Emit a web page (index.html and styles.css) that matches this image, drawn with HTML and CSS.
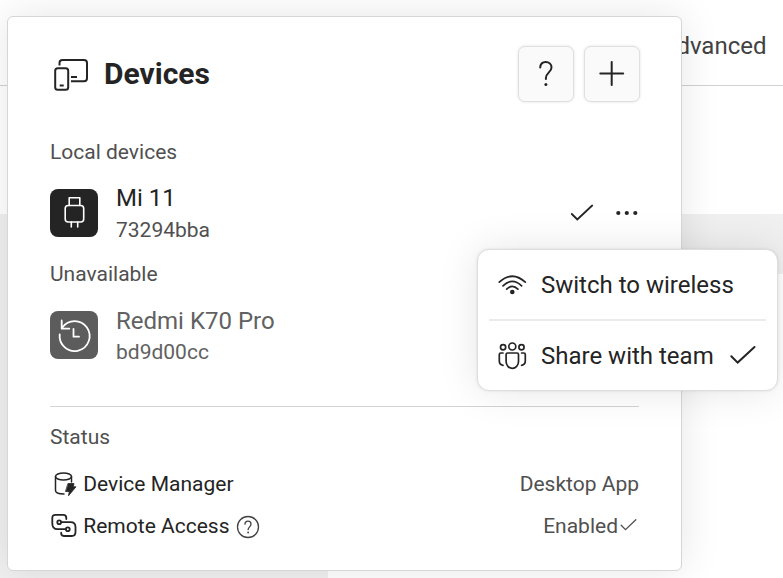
FILE: index.html
```html
<!DOCTYPE html>
<html lang="en">
<head>
<meta charset="utf-8">
<title>Devices</title>
<link rel="stylesheet" href="styles.css">
</head>
<body>
<div class="page">
  <header class="topbar"><span class="tab">Advanced</span></header>
  <main class="workspace">
    <aside class="sidebar"></aside>
    <div class="toolbar"></div>
  </main>
</div>

<section class="card">
  <header class="card-header">
    <svg class="devices-icon" width="36" height="34" viewBox="0 0 36 34" fill="none" stroke="currentColor" stroke-width="2" stroke-linecap="butt">
      <path d="M5.500 7.500V5Q5.500 2 8.500 2H30Q33 2 33 5V20.300Q33 23.300 30 23.300H17M17 19H23"/>
      <rect x="1.200" y="10.300" width="13" height="21.400" rx="2.500"/>
      <path d="M5.700 27.500H9.700"/>
    </svg>
    <h1>Devices</h1>
    <div class="actions">
      <button aria-label="Help"><svg width="30" height="30" viewBox="0 0 30 30" fill="none" stroke="currentColor" stroke-width="2" stroke-linecap="round"><path d="M9.200 8.500C9.500 4.800 11.700 3 14.700 3C17.900 3 20.500 5.200 20.500 8.500C20.500 13 14.900 13.800 14.900 19V20"/><circle cx="14.900" cy="25.600" r="1.500" fill="currentColor" stroke="none"/></svg></button>
      <button aria-label="Add"><svg width="30" height="30" viewBox="0 0 30 30" fill="none" stroke="currentColor" stroke-width="2" stroke-linecap="round"><path d="M3.300 14.500H26.200M14.700 3V26"/></svg></button>
    </div>
  </header>
  <h2 class="label local">Local devices</h2>
  <div class="device">
    <div class="tile">
      <svg width="48" height="48" viewBox="0 0 48 48" fill="none" stroke="currentColor" stroke-width="1.600" stroke-linejoin="round" stroke-linecap="round"><path d="M19.200 16.500V8.700H29.800V16.500"/><rect x="15.200" y="16.500" width="18.500" height="16.500" rx="3"/><path d="M21.300 33V38M27.700 33V38"/></svg>
    </div>
    <div class="info"><div class="name">Mi 11</div><div class="serial">73294bba</div></div>
    <svg class="selected" width="24" height="20" viewBox="0 0 24 20" fill="none" stroke="currentColor" stroke-width="1.800" stroke-linecap="round"><path d="M1.800 11L7.300 16.500L22.200 2.500"/></svg>
    <svg class="more" width="24" height="8" viewBox="0 0 24 8" fill="currentColor"><circle cx="3.300" cy="4" r="2.100"/><circle cx="11.800" cy="4" r="2.100"/><circle cx="20.300" cy="4" r="2.100"/></svg>
  </div>
  <h2 class="label missing">Unavailable</h2>
  <div class="device unavailable">
    <div class="tile">
      <svg width="48" height="48" viewBox="0 0 48 48" fill="none" stroke="currentColor" stroke-width="1.800" stroke-linecap="round" stroke-linejoin="round"><path d="M9.700 23.500A15 15 0 1 0 12.300 16.500M11.700 9.500V17.700H19.300"/><path d="M23.500 18V25.700H29"/></svg>
    </div>
    <div class="info"><div class="name">Redmi K70 Pro</div><div class="serial">bd9d00cc</div></div>
  </div>
  <hr>
  <h2 class="label status">Status</h2>
  <div class="row">
    <svg class="row-icon" width="28" height="28" viewBox="0 0 28 28" fill="none" stroke="currentColor" stroke-width="1.500" stroke-linecap="round"><ellipse cx="13.500" cy="6.500" rx="8" ry="3.500"/><path d="M5.500 6.500V20.500C5.500 22.800 9 24 14 24M21.500 6.500V12"/><path fill="currentColor" stroke="currentColor" stroke-width=".8" stroke-linejoin="round" d="M18.300 13.500H24L23.300 16.800H26L18.500 25.800L19.300 21.500H15.800Z"/></svg>
    <span>Device Manager</span><span class="value">Desktop App</span>
  </div>
  <div class="row">
    <svg class="row-icon" width="28" height="28" viewBox="0 0 28 28" fill="none" stroke="currentColor" stroke-width="1.800" stroke-linecap="round"><path d="M16.300 7V6Q16.300 2.900 13.300 2.900H5.500Q2.300 2.900 2.300 6V11.500Q2.300 17.200 7.500 17.200H15.500"/><path d="M11.500 10.200H20.500Q25.500 10.200 25.500 15V20Q25.500 24 21.800 24H14.500Q11.200 24 11.200 21.500V20.700"/><circle cx="9.200" cy="10.200" r="1.900"/><circle cx="17.800" cy="17.200" r="1.900"/></svg>
    <span>Remote Access</span>
    <svg class="hint" width="24" height="24" viewBox="0 0 24 24" fill="none" stroke="currentColor" stroke-width="1.300" stroke-linecap="round"><circle cx="12" cy="12" r="10.500"/><path d="M9 9.200C9 7.200 10.200 6.200 12 6.200S15 7.300 15 9.200C15 11.500 12.100 12.200 12.100 14.700"/><circle cx="12.100" cy="17.500" r=".9" fill="currentColor" stroke="none"/></svg>
    <span class="value">Enabled<svg width="21" height="18" viewBox="0 0 21 18" fill="none" stroke="currentColor" stroke-width="1.300" stroke-linecap="round"><path d="M3.200 8.300L7.500 12.700L17.800 2.700"/></svg></span>
  </div>
</section>

<div class="menu">
  <div class="item">
    <svg width="30" height="30" viewBox="0 0 30 30" fill="none" stroke="currentColor" stroke-width="1.700" stroke-linecap="round"><path d="M2.300 12.200Q15.300 .3 28.300 12.200M6 15.800Q15.300 6.800 24.600 15.800M9.700 19.200Q15.300 13.500 20.900 19.200"/><circle cx="15.300" cy="22" r="2.300" fill="currentColor" stroke="none"/></svg>
    <span>Switch to wireless</span>
  </div>
  <div class="separator"></div>
  <div class="item">
    <svg width="30" height="30" viewBox="0 0 30 30" fill="none" stroke="currentColor" stroke-width="1.700" stroke-linecap="round"><circle cx="15.300" cy="5.500" r="3.500"/><circle cx="6.100" cy="6.300" r="2.600"/><circle cx="24.500" cy="6.300" r="2.600"/><path d="M10.600 12H20Q21.500 12 21.500 13.500V20.500A6.200 6.800 0 0 1 9.100 20.500V13.500Q9.100 12 10.600 12ZM6 12H3.800Q2.300 12 2.300 13.500V20Q2.300 23.700 6 24.300M24.600 12H26.800Q28.300 12 28.300 13.500V20Q28.300 23.700 24.600 24.300"/></svg>
    <span>Share with team</span>
    <svg class="checked" width="28" height="22" viewBox="0 0 28 22" fill="none" stroke="currentColor" stroke-width="2" stroke-linecap="round"><path d="M2.300 11.200L8.700 17.600L25.500 2"/></svg>
  </div>
</div>
</body>
</html>
```
FILE: styles.css
```css
* { box-sizing: border-box; }
body {
  margin: 0;
  width: 783px;
  height: 578px;
  overflow: hidden;
  background: #fff;
  color: #242424;
  font-family: Roboto, sans-serif;
  font-size: 21px;
}
svg { display: block; flex: none; }
.page { display: flex; flex-direction: column; height: 578px; }
.topbar {
  height: 86px;
  display: flex;
  justify-content: flex-end;
  align-items: center;
  padding: 6px 16.5px 0 0;
  border-bottom: 1px solid #d1d1d1;
  color: #424242;
  font-size: 24px;
}
.workspace { flex: 1; display: flex; margin-top: 128px; }
.sidebar { width: 328px; background: #f0f0f0; }
.toolbar { flex: 1; height: 60px; background: #f0f0f0; }

.card {
  position: absolute;
  left: 7px;
  top: 16px;
  width: 675px;
  height: 555px;
  padding: 28px 42px 0;
  background: #fff;
  border: 1px solid #d6d6d6;
  border-radius: 6px;
  box-shadow: 0 0 40px rgba(0, 0, 0, .1);
}
.card-header { display: flex; align-items: center; height: 58px; }
.devices-icon { margin: 1px 14px 0 4px; }
h1 { margin: 0; font-size: 30px; font-weight: 700; line-height: 36px; }
.actions { display: flex; gap: 10px; margin: 0 -1px 0 auto; }
button {
  width: 56px;
  height: 56px;
  display: grid;
  place-items: center;
  padding: 0;
  color: inherit;
  background: #fafafa;
  border: 1px solid #e0e0e0;
  border-radius: 7px;
  box-shadow: 0 0 3px rgba(0, 0, 0, .12);
}
.label { margin: 0; color: #505050; font-size: 21px; font-weight: 400; line-height: 26px; }
.local { margin-top: 36px; }
.device { display: flex; align-items: center; height: 64px; }
.local + .device { margin-top: 16px; }
.tile {
  width: 48px;
  height: 48px;
  margin-right: 18px;
  border-radius: 8px;
  background: #242424;
  color: #fff;
}
.info { padding-top: 2px; }
.name { font-size: 24px; line-height: 32px; }
.serial { color: #505050; line-height: 32px; }
.selected { margin-left: auto; }
.more { margin: 0 0 0 21px; }
.missing { margin-top: 16px; }
.unavailable { margin-top: 16px; color: #616161; }
.unavailable .info { padding-top: 2px; }
.unavailable .name { line-height: 32px; }
.unavailable .tile { background: #5c5c5c; }
.unavailable .serial { color: #616161; line-height: 30px; }
hr { height: 1px; margin: 39px 0 0; border: 0; background: #d4d4d4; }
.status { margin: 17px 0 13px; }
.row { display: flex; align-items: center; height: 42px; }
.row-icon { margin-right: 5.300px; }
.hint { margin: 1px 0 0 7px; color: #424242; }
.value { display: flex; align-items: center; margin-left: auto; color: #505050; }

.menu {
  position: absolute;
  left: 477px;
  top: 249px;
  width: 301px;
  height: 142px;
  padding: 0 11px;
  background: #fff;
  border: 1px solid #dedede;
  border-radius: 12px;
  box-shadow: 0 0 3px rgba(0, 0, 0, .1), 0 0 40px rgba(0, 0, 0, .1);
}
.item { display: flex; align-items: center; height: 69px; padding-left: 8px; font-size: 24px; }
.menu .item:first-child span { margin-top: 1px; }
.item span { margin-left: 14px; }
.separator { height: 2px; background: #ebebeb; }
.checked { margin-left: 15px; }
```
